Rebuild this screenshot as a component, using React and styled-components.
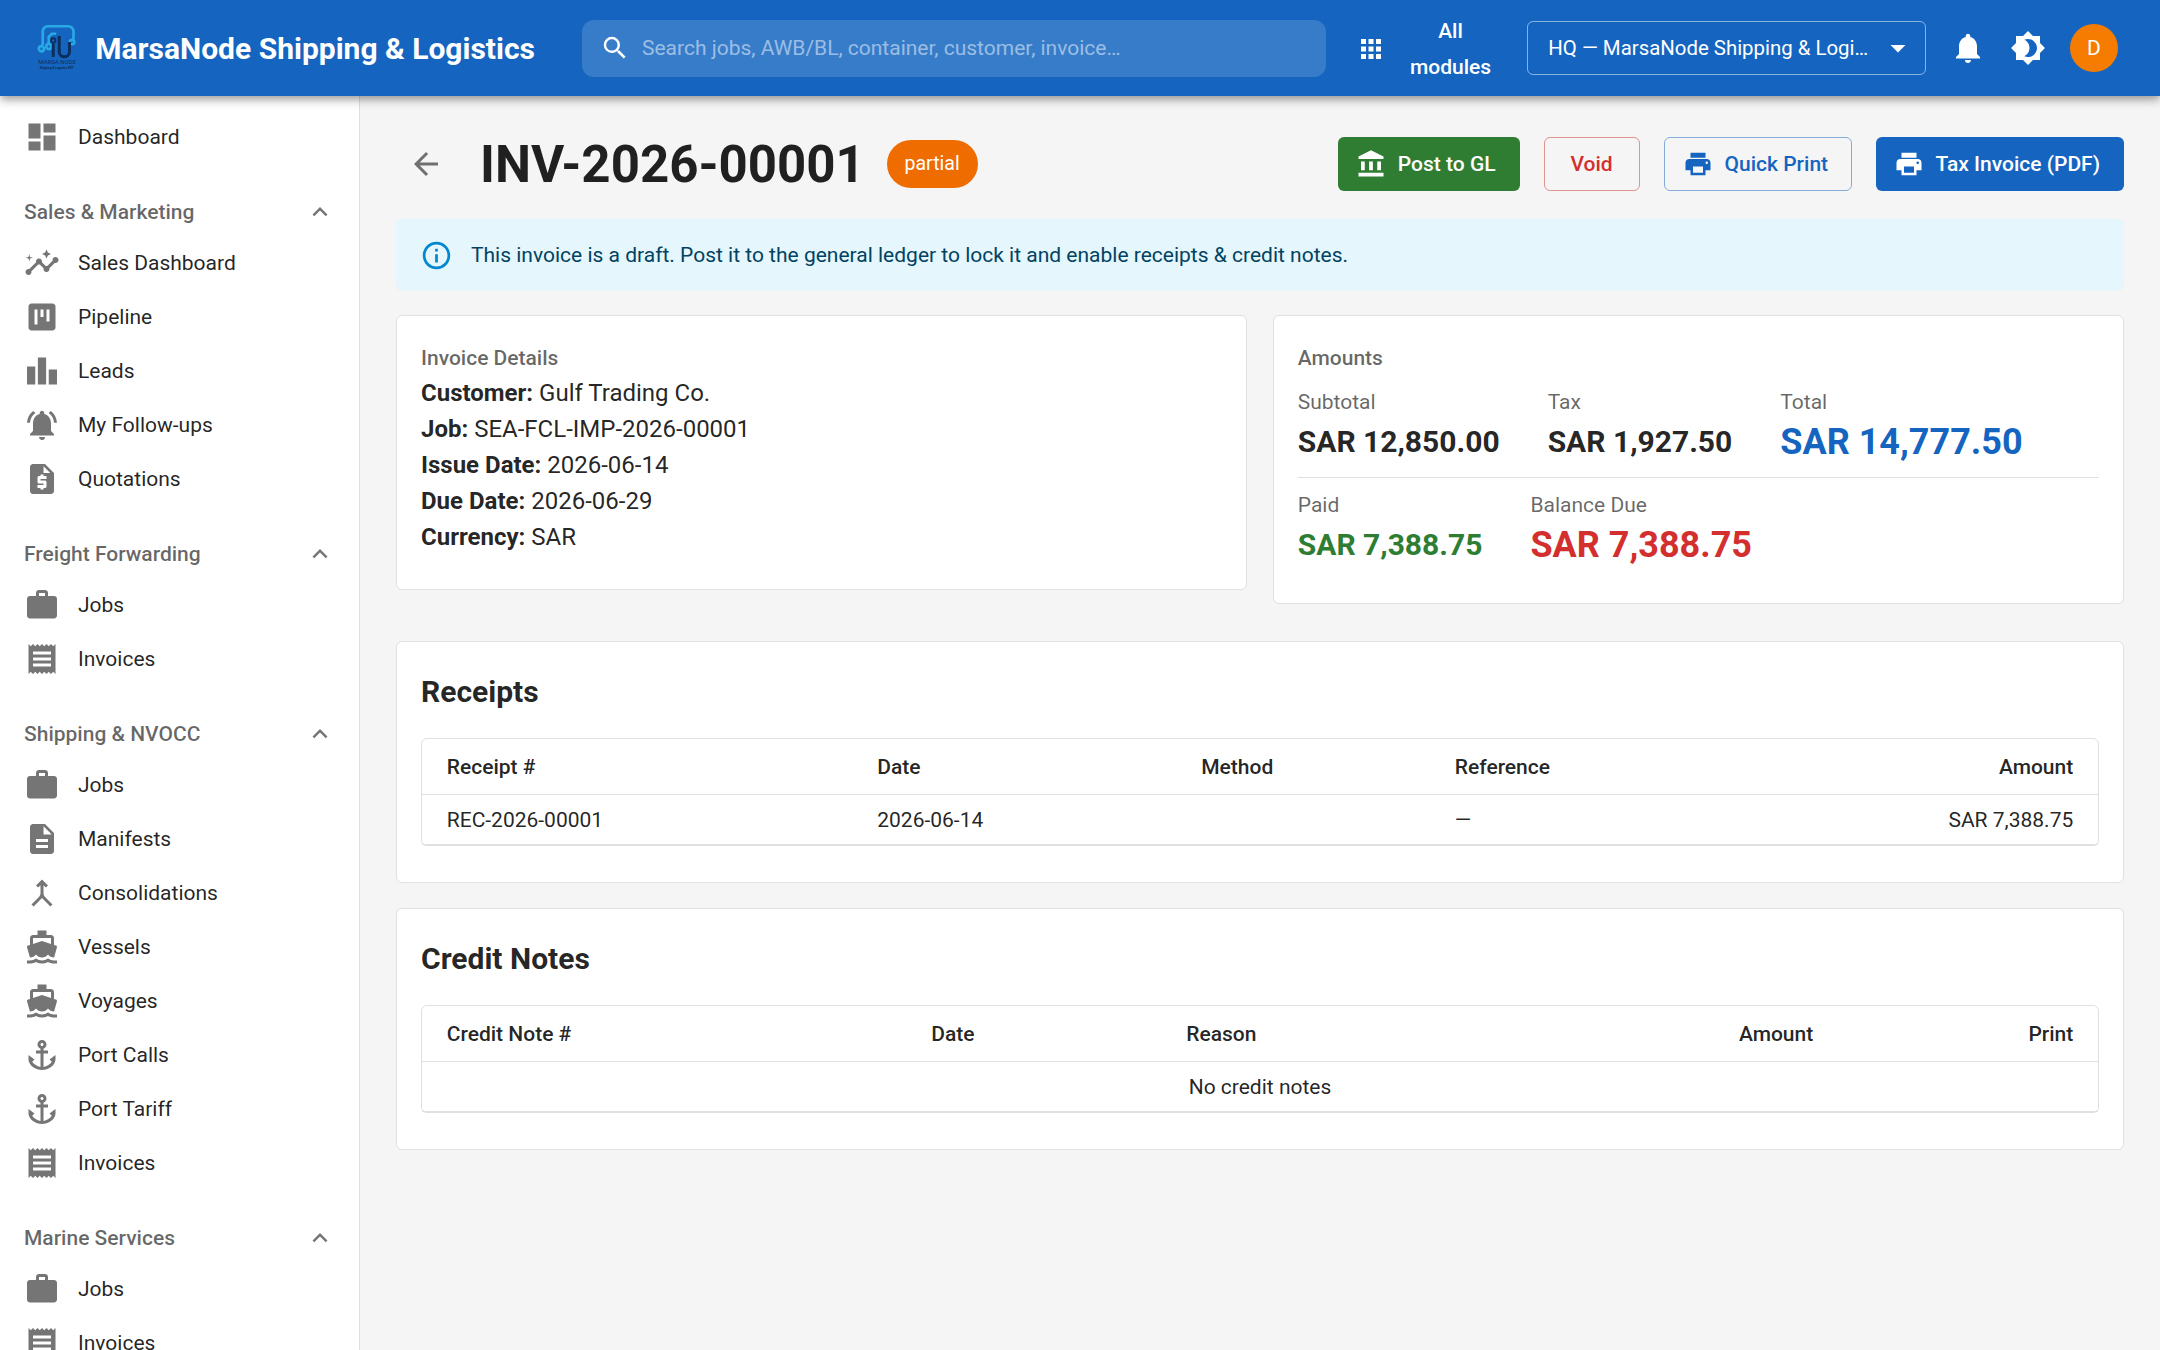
import styled, { createGlobalStyle } from "styled-components";
import {
  MdAccountBalance, MdAnchor, MdApps, MdArrowBack, MdArrowDropDown, MdBrightness4,
  MdDashboard, MdDescription, MdDirectionsBoat, MdExpandLess, MdInfoOutline, MdInsights,
  MdLeaderboard, MdMerge, MdNotifications, MdNotificationsActive, MdPrint, MdReceipt,
  MdRequestQuote, MdSearch, MdViewKanban, MdWork,
} from "react-icons/md";

const sections = [
  {
    title: "Sales & Marketing",
    items: [
      ["Sales Dashboard", MdInsights],
      ["Pipeline", MdViewKanban],
      ["Leads", MdLeaderboard],
      ["My Follow-ups", MdNotificationsActive],
      ["Quotations", MdRequestQuote],
    ],
  },
  {
    title: "Freight Forwarding",
    items: [
      ["Jobs", MdWork],
      ["Invoices", MdReceipt],
    ],
  },
  {
    title: "Shipping & NVOCC",
    items: [
      ["Jobs", MdWork],
      ["Manifests", MdDescription],
      ["Consolidations", MdMerge],
      ["Vessels", MdDirectionsBoat],
      ["Voyages", MdDirectionsBoat],
      ["Port Calls", MdAnchor],
      ["Port Tariff", MdAnchor],
      ["Invoices", MdReceipt],
    ],
  },
  {
    title: "Marine Services",
    items: [
      ["Jobs", MdWork],
      ["Invoices", MdReceipt],
    ],
  },
];

const details = [
  ["Customer:", "Gulf Trading Co."],
  ["Job:", "SEA-FCL-IMP-2026-00001"],
  ["Issue Date:", "2026-06-14"],
  ["Due Date:", "2026-06-29"],
  ["Currency:", "SAR"],
];

function Logo() {
  return (
    <LogoMark viewBox="0 0 32 32">
      <g fill="none" stroke="#29a8e6" strokeWidth="1.8">
        <path d="M4.5 14V5a3.5 3.5 0 0 1 3.5-3.5h13.5a3.5 3.5 0 0 1 3.5 3.5v5" />
        <circle cx="3.6" cy="16.5" r="1.7" />
        <circle cx="8.5" cy="15" r="1.7" />
        <circle cx="24" cy="12" r="1.5" />
        <path d="M8.5 13V8.5l2-2h3" />
      </g>
      <g fill="none" stroke="#0e2f5c" strokeWidth="2">
        <circle cx="11.5" cy="11" r="1.5" strokeWidth="1.2" />
        <path d="M11.5 13v9" />
        <path d="M15.5 8v10.5a3.4 3.4 0 0 0 6.8 0V12" />
      </g>
      <LogoText x="1.5" y="26.5" fontSize="4">MARSA NODE</LogoText>
      <LogoText x="2.5" y="30" fontSize="2" fontWeight="700">Shipping &amp; Logistics ERP</LogoText>
    </LogoMark>
  );
}

export default function App() {
  return (
    <Page>
      <GlobalStyle />
      <TopBar>
        <Logo />
        <BrandName>MarsaNode Shipping &amp; Logistics</BrandName>
        <SearchBox>
          <MdSearch size={20} />
          <SearchInput placeholder="Search jobs, AWB/BL, container, customer, invoice…" />
        </SearchBox>
        <ModulesButton>
          <MdApps size={20} />
          <span>All modules</span>
        </ModulesButton>
        <CompanySelect>
          <CompanyName>HQ — MarsaNode Shipping &amp; Logistics</CompanyName>
          <MdArrowDropDown size={24} />
        </CompanySelect>
        <TopIcon><MdNotifications size={24} /></TopIcon>
        <TopIcon><MdBrightness4 size={24} /></TopIcon>
        <Avatar>D</Avatar>
      </TopBar>

      <Body>
        <Sidebar>
          <NavItem>
            <NavIcon><MdDashboard size={24} /></NavIcon>
            Dashboard
          </NavItem>
          {sections.map((section) => (
            <NavSection key={section.title}>
              <SectionHeader>
                {section.title}
                <MdExpandLess size={20} />
              </SectionHeader>
              {section.items.map(([label, Icon]) => (
                <NavItem key={label + section.title}>
                  <NavIcon><Icon size={24} /></NavIcon>
                  {label}
                </NavItem>
              ))}
            </NavSection>
          ))}
        </Sidebar>

        <Main>
          <PageHeader>
            <BackButton><MdArrowBack size={24} /></BackButton>
            <InvoiceTitle>INV-2026-00001</InvoiceTitle>
            <StatusChip>partial</StatusChip>
            <Actions>
              <ActionButton $variant="green"><MdAccountBalance size={20} />Post to GL</ActionButton>
              <ActionButton $variant="void">Void</ActionButton>
              <ActionButton $variant="outline"><MdPrint size={20} />Quick Print</ActionButton>
              <ActionButton $variant="blue"><MdPrint size={20} />Tax Invoice (PDF)</ActionButton>
            </Actions>
          </PageHeader>

          <InfoAlert>
            <MdInfoOutline size={22} />
            This invoice is a draft. Post it to the general ledger to lock it and enable receipts &amp; credit notes.
          </InfoAlert>

          <SummaryGrid>
            <Card>
              <CardLabel>Invoice Details</CardLabel>
              {details.map(([key, value]) => (
                <DetailLine key={key}>
                  <strong>{key}</strong> {value}
                </DetailLine>
              ))}
            </Card>
            <AmountsCard>
              <CardLabel>Amounts</CardLabel>
              <AmountRow>
                <Amount label="Subtotal" value="SAR 12,850.00" />
                <Amount label="Tax" value="SAR 1,927.50" />
                <Amount label="Total" value="SAR 14,777.50" $big $color="#1565c0" />
              </AmountRow>
              <Divider />
              <AmountRow>
                <Amount label="Paid" value="SAR 7,388.75" $color="#2e7d32" />
                <Amount label="Balance Due" value="SAR 7,388.75" $big $color="#d32f2f" />
              </AmountRow>
            </AmountsCard>
          </SummaryGrid>

          <TableCard>
            <SectionTitle>Receipts</SectionTitle>
            <TableFrame>
              <colgroup>
                <col width="287" /><col width="216" /><col width="169" /><col width="200" /><col />
              </colgroup>
              <thead>
                <tr>
                  <Th>Receipt #</Th>
                  <Th>Date</Th>
                  <Th>Method</Th>
                  <Th>Reference</Th>
                  <Th $right>Amount</Th>
                </tr>
              </thead>
              <tbody>
                <tr>
                  <Td>REC-2026-00001</Td>
                  <Td>2026-06-14</Td>
                  <Td />
                  <Td>—</Td>
                  <Td $right>SAR 7,388.75</Td>
                </tr>
              </tbody>
            </TableFrame>
          </TableCard>

          <TableCard>
            <SectionTitle>Credit Notes</SectionTitle>
            <TableFrame>
              <colgroup>
                <col width="323" /><col width="170" /><col width="281" /><col width="170" /><col />
              </colgroup>
              <thead>
                <tr>
                  <Th>Credit Note #</Th>
                  <Th>Date</Th>
                  <Th>Reason</Th>
                  <Th $right>Amount</Th>
                  <Th $right>Print</Th>
                </tr>
              </thead>
              <tbody>
                <tr>
                  <Td colSpan={5} $center>No credit notes</Td>
                </tr>
              </tbody>
            </TableFrame>
          </TableCard>
        </Main>
      </Body>
    </Page>
  );
}

function Amount({ label, value, $big, $color }) {
  return (
    <div>
      <AmountLabel>{label}</AmountLabel>
      <AmountValue $big={$big} $color={$color}>{value}</AmountValue>
    </div>
  );
}

const GlobalStyle = createGlobalStyle`
  html, body {
    margin: 0;
    background: #f5f5f5;
    overflow: hidden;
  }
  * {
    box-sizing: border-box;
  }
`;

/* the reference is a 1440x900 layout shot at 1.5x */
const Page = styled.div`
  zoom: 1.5;
  width: 1440px;
  height: 900px;
  overflow: hidden;
  display: flex;
  flex-direction: column;
  font-family: Roboto, "Liberation Sans", sans-serif;
  font-size: 14px;
  color: rgba(0, 0, 0, 0.87);
  background: #f5f5f5;
`;

const TopBar = styled.header`
  flex: 0 0 64px;
  display: flex;
  align-items: center;
  padding: 0 28px 0 24px;
  background: #1565c0;
  color: #fff;
  position: relative;
  z-index: 2;
  box-shadow: 0 2px 4px -1px rgba(0, 0, 0, 0.2), 0 4px 5px rgba(0, 0, 0, 0.14), 0 1px 10px rgba(0, 0, 0, 0.12);
`;

const LogoMark = styled.svg`
  width: 32px;
  height: 32px;
  flex: none;
`;

const LogoText = styled.text`
  font-family: Roboto, sans-serif;
  fill: #0e2f5c;
`;

const BrandName = styled.div`
  margin: 1px 0 0 7.5px;
  font-size: 20px;
  font-weight: 700;
  line-height: 32px;
  white-space: nowrap;
  width: 324.5px;
  flex: none;
`;

const SearchBox = styled.div`
  flex: 0 0 496px;
  height: 38px;
  display: flex;
  align-items: center;
  gap: 8px;
  padding: 0 12px;
  border-radius: 8px;
  background: rgba(255, 255, 255, 0.15);
`;

const SearchInput = styled.input`
  flex: 1;
  border: 0;
  outline: 0;
  background: transparent;
  color: #fff;
  font: 400 14px Roboto, sans-serif;
  padding: 0;
  &::placeholder {
    color: rgba(255, 255, 255, 0.5);
    opacity: 1;
  }
`;

const ModulesButton = styled.div`
  flex: 0 0 114px;
  margin: 0 8px 0 12px;
  padding: 1px 8px 0;
  display: flex;
  align-items: center;
  gap: 8px;
  font-weight: 500;
  line-height: 24px;
  text-align: center;
  & > span {
    flex: 1;
  }
`;

const CompanySelect = styled.div`
  flex: 0 0 266px;
  height: 36px;
  display: flex;
  align-items: center;
  justify-content: space-between;
  padding: 0 6px 0 13.5px;
  margin-right: 8px;
  border: 1px solid rgba(255, 255, 255, 0.5);
  border-radius: 4px;
`;

const CompanyName = styled.span`
  width: 214px;
  font-size: 13.6px;
  overflow: hidden;
  white-space: nowrap;
  text-overflow: ellipsis;
`;

const TopIcon = styled.div`
  flex: 0 0 40px;
  height: 40px;
  display: flex;
  align-items: center;
  justify-content: center;
`;

const Avatar = styled.div`
  flex: 0 0 32px;
  height: 32px;
  margin-left: 8px;
  border-radius: 50%;
  background: #f57c00;
  display: flex;
  align-items: center;
  justify-content: center;
`;

const Body = styled.div`
  flex: 1;
  min-height: 0;
  display: flex;
`;

const Sidebar = styled.nav`
  flex: 0 0 240px;
  padding-top: 9px;
  background: #fff;
  border-right: 1px solid rgba(0, 0, 0, 0.12);
  overflow: hidden;
`;

const NavSection = styled.section`
  margin-top: 16px;
`;

const SectionHeader = styled.div`
  height: 32px;
  display: flex;
  align-items: center;
  justify-content: space-between;
  padding: 0 16px;
  font-weight: 500;
  color: rgba(0, 0, 0, 0.6);
  & > svg {
    color: rgba(0, 0, 0, 0.54);
  }
`;

const NavItem = styled.div`
  height: 36px;
  display: flex;
  align-items: center;
  padding-left: 16px;
`;

const NavIcon = styled.span`
  flex: 0 0 36px;
  height: 24px;
  color: #757575;
  & > svg {
    display: block;
  }
`;

const Main = styled.main`
  flex: 1;
  min-width: 0;
  padding: 24px;
`;

const PageHeader = styled.div`
  display: flex;
  align-items: center;
  margin-bottom: 16px;
`;

const BackButton = styled.div`
  flex: 0 0 40px;
  height: 40px;
  margin-right: 16px;
  display: flex;
  align-items: center;
  justify-content: center;
  color: rgba(0, 0, 0, 0.54);
`;

const InvoiceTitle = styled.h1`
  margin: 0 14.5px 0 0;
  padding-top: 2px;
  font-size: 34px;
  font-weight: 700;
  line-height: 40px;
`;

const StatusChip = styled.span`
  height: 32px;
  padding: 0 12px;
  display: inline-flex;
  align-items: center;
  border-radius: 16px;
  background: #ef6c00;
  color: #fff;
  font-size: 13px;
  font-weight: 400;
`;

const Actions = styled.div`
  margin-left: auto;
  display: flex;
  gap: 16px;
`;

const buttonColors = {
  green: "background: #2e7d32; color: #fff; border: 0; padding: 0 16px 0 12px;",
  blue: "background: #1565c0; color: #fff; border: 0; padding: 0 16px 0 12px;",
  void: "color: #d32f2f; border: 1px solid rgba(211,47,47,.5); padding: 0 15px; min-width: 64px;",
  outline: "color: #1565c0; border: 1px solid rgba(21,101,192,.5); padding: 0 15px 0 12px;",
};

const ActionButton = styled.div`
  height: 36px;
  display: flex;
  align-items: center;
  justify-content: center;
  gap: 8px;
  border-radius: 4px;
  font-size: 14px;
  font-weight: 500;
  ${(p) => buttonColors[p.$variant]}
`;

const InfoAlert = styled.div`
  height: 48px;
  display: flex;
  align-items: center;
  gap: 12px;
  padding: 0 16px;
  margin-bottom: 16px;
  border-radius: 4px;
  background: #e5f6fd;
  color: #014361;
  & > svg {
    color: #0288d1;
    flex: none;
  }
`;

const SummaryGrid = styled.div`
  display: grid;
  grid-template-columns: 1fr 1fr;
  gap: 17px;
  align-items: start;
  margin-bottom: 25px;
`;

const Card = styled.div`
  background: #fff;
  border: 1px solid #e0e0e0;
  border-radius: 4px;
  padding: 17px 16px 23px;
`;

const AmountsCard = styled(Card)`
  padding-bottom: 22.5px;
`;

const CardLabel = styled.div`
  font-weight: 500;
  line-height: 22px;
  color: rgba(0, 0, 0, 0.6);
`;

const DetailLine = styled.div`
  font-size: 16px;
  line-height: 24px;
  & > strong {
    font-weight: 700;
  }
`;

const AmountRow = styled.div`
  display: flex;
  gap: 32px;
  margin-top: 8px;
`;

const AmountLabel = styled.div`
  line-height: 21px;
  color: rgba(0, 0, 0, 0.6);
`;

const AmountValue = styled.div`
  font-size: ${(p) => (p.$big ? "24px" : "20px")};
  font-weight: 700;
  line-height: 32px;
  color: ${(p) => p.$color || "rgba(0, 0, 0, 0.87)"};
`;

const Divider = styled.hr`
  margin: 7px 0 0;
  border: 0;
  border-top: 1px solid #e0e0e0;
`;

const TableCard = styled(Card)`
  margin-bottom: 17px;
  padding-bottom: 24px;
`;

const SectionTitle = styled.h2`
  margin: 0 0 15px;
  font-size: 20px;
  font-weight: 700;
  line-height: 32px;
`;

const TableFrame = styled.table`
  width: 100%;
  table-layout: fixed;
  border-collapse: separate;
  border-spacing: 0;
  border: 1px solid #e0e0e0;
  border-radius: 4px;
`;

const Th = styled.th`
  padding: 6.67px 16.5px 5.33px;
  font-weight: 500;
  line-height: 24.33px;
  text-align: ${(p) => (p.$right ? "right" : "left")};
  border-bottom: 1px solid #e0e0e0;
`;

const Td = styled.td`
  padding: 6.67px 16.5px 5.33px;
  line-height: 20.67px;
  text-align: ${(p) => (p.$right ? "right" : p.$center ? "center" : "left")};
  border-bottom: 1px solid #e0e0e0;
`;
